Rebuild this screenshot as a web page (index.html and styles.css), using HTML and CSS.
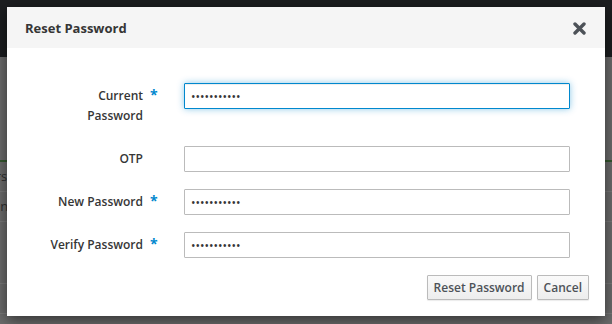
FILE: index.html
```html
<!DOCTYPE html>
<html lang="en">
    <head>
        <meta charset="UTF-8" />
        <title>Reset Password</title>
        <link rel="stylesheet" href="styles.css">
    </head>

    <body>
        <!-- page behind the modal (dimmed by the backdrop) -->
        <div class="page">
            <div class="navbar"></div>
            <div class="page-body">
                <div class="tabs"></div>
                <div class="list-row"><span class="list-text">Errors</span></div>
                <div class="list-row"><span class="list-text">Actions</span></div>
                <div class="list-row tall"></div>
                <div class="list-row"></div>
            </div>
        </div>

        <div class="modal">
            <div class="modal-header">
                <h4 class="modal-title">Reset Password</h4>
                <button class="close" type="button" aria-label="Close">
                    <svg width="13" height="13" viewBox="0 0 13 13">
                        <path d="M2 2 L11 11 M11 2 L2 11" stroke="#4d5258" stroke-width="3.4" stroke-linecap="round" fill="none" />
                    </svg>
                </button>
            </div>

            <form class="modal-body">
                <div class="form-row">
                    <label class="field-label" for="current">Current<br>Password</label>
                    <span class="req">*</span>
                    <div class="control">
                        <input id="current" class="input is-focus" type="password" value="secretpass1" autofocus />
                    </div>
                </div>
                <div class="form-row">
                    <label class="field-label" for="otp">OTP</label>
                    <span class="req"></span>
                    <div class="control">
                        <input id="otp" class="input" type="text" value="" />
                    </div>
                </div>
                <div class="form-row">
                    <label class="field-label" for="newpw">New Password</label>
                    <span class="req">*</span>
                    <div class="control">
                        <input id="newpw" class="input" type="password" value="secretpass2" />
                    </div>
                </div>
                <div class="form-row">
                    <label class="field-label" for="verify">Verify Password</label>
                    <span class="req">*</span>
                    <div class="control">
                        <input id="verify" class="input" type="password" value="secretpass2" />
                    </div>
                </div>
            </form>

            <div class="modal-footer">
                <button class="btn" type="button">Reset Password</button>
                <button class="btn" type="button">Cancel</button>
            </div>
        </div>
    </body>
</html>
```

FILE: styles.css
```css
* {
    margin: 0;
    padding: 0;
    box-sizing: border-box;
}

html,
body {
    width: 612px;
    height: 324px;
}

body {
    overflow: hidden;
    position: relative;
    font-family: "Open Sans", "Noto Sans", sans-serif;
    font-size: 12px;
    color: #363636;
    background: #6c6c6c;
}

/* dimmed page behind */
.navbar {
    height: 57px;
    background: #1c1e20;
}

.page-body {
    padding-top: 103px;
}

.tabs {
    height: 2px;
    background: #35592f;
}

.list-row {
    height: 30px;
    border-bottom: 1px solid #7a7a7a;
    padding-left: 0;
    line-height: 28px;
    overflow: hidden;
}

.list-row.tall {
    height: 62px;
}

.list-text {
    display: inline-block;
    margin-left: -30px;
    font-size: 13px;
    color: #2f2f2f;
}

/* modal */
.modal {
    position: absolute;
    left: 7px;
    top: 7px;
    width: 598px;
    height: 309px;
    background: #fff;
    box-shadow: 0 4px 14px rgba(0, 0, 0, 0.55);
}

.modal-header {
    display: flex;
    align-items: center;
    justify-content: space-between;
    height: 41px;
    padding: 0 19px 0 18px;
    background: #f5f5f5;
}

.modal-title {
    font-size: 13px;
    font-weight: 700;
    color: #363636;
}

.close {
    display: flex;
    border: 0;
    background: none;
    margin-top: 1px;
}

.modal-body {
    display: flex;
    flex-direction: column;
    gap: 16px;
    padding: 35px 35px 0 0;
}

.form-row {
    display: flex;
    align-items: flex-start;
}

.field-label {
    width: 136px;
    flex: none;
    padding: 3px 0 4px;
    line-height: 20px;
    text-align: right;
    font-weight: 600;
    color: #363636;
}

.req {
    width: 14px;
    flex: none;
    padding: 2px 0 0 7px;
    line-height: 20px;
    font-size: 14px;
    font-weight: 700;
    color: #0088ce;
}

.control {
    flex: 1;
    margin-left: 27px;
}

.input {
    display: block;
    width: 100%;
    height: 26px;
    padding: 2px 6px;
    border: 1px solid #bbb;
    border-radius: 1px;
    font-family: "Open Sans", "Noto Sans", sans-serif;
    font-size: 12px;
    color: #363636;
    background: #fff;
    outline: none;
    caret-color: #000;
}

.input.is-focus {
    border-color: #0088ce;
    box-shadow: inset 0 1px 1px rgba(3, 3, 3, 0.075), 0 0 7px rgba(0, 136, 206, 0.45);
}

.modal-footer {
    display: flex;
    justify-content: flex-end;
    gap: 5px;
    padding: 16px 16px 0 0;
}

.btn {
    height: 25px;
    padding: 0 6px;
    border: 1px solid #bbb;
    border-radius: 1px;
    background: linear-gradient(#fafafa, #ededed);
    box-shadow: 0 1px 1px rgba(3, 3, 3, 0.08);
    font-family: "Open Sans", "Noto Sans", sans-serif;
    font-size: 12px;
    font-weight: 600;
    color: #4d5258;
}
```
